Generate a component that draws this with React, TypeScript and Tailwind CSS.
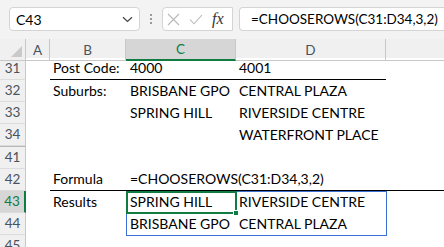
import React from "react";

const FONT = "[font-family:Lato,'Liberation_Sans',sans-serif]";

type Cell = { text?: string; cls?: string };

function RowHeader({ n, selected }: { n: string; selected?: boolean }) {
  return (
    <div
      className={
        "box-border flex items-center justify-center border-b border-[#dcdcdc] text-[13.5px] " +
        (selected
          ? "bg-[#d6d6d6] text-[#107c41] border-r-2 border-r-[#107c41]"
          : "bg-[#f0f0f0] text-[#48535e] border-r border-r-[#c8c8c8]")
      }
    >
      {n}
    </div>
  );
}

function C({ text, cls }: Cell) {
  return (
    <div className={"box-border flex items-end pl-[3px] pb-[3px] text-[14px] leading-[17px] text-black whitespace-nowrap overflow-visible " + (cls ?? "")}>
      {text}
    </div>
  );
}

function Row({
  n,
  cells,
  selected,
  h = "h-[22px]",
}: {
  n: string;
  cells: Cell[];
  selected?: boolean;
  h?: string;
}) {
  return (
    <div className={"grid grid-cols-[26px_24px_76px_110px_150px_1fr] " + h}>
      <RowHeader n={n} selected={selected} />
      {cells.map((c, i) => (
        <C key={i} {...c} />
      ))}
    </div>
  );
}

export default function App() {
  return (
    <div className={"w-[444px] h-[247px] overflow-hidden bg-white " + FONT}>
      {/* Formula bar */}
      <div className="flex h-[39px] items-start bg-[#f3f3f3] pt-[7px] pl-[9px]">
        <div className="box-border flex h-[24px] w-[131px] items-center justify-between rounded-[4px] border border-[#d4d4d4] bg-white pl-[6px] pr-[6px] text-[14px] text-black">
          <span>C43</span>
          <svg width="11" height="7" viewBox="0 0 11 7" fill="none">
            <path d="M1 1.2 L5.5 5.5 L10 1.2" stroke="#444" strokeWidth="1.2" />
          </svg>
        </div>
        <div className="flex w-[22px] flex-col items-center justify-center gap-[2px] self-stretch pb-[8px]">
          <div className="h-[2px] w-[2px] bg-[#9a9a9a]" />
          <div className="h-[2px] w-[2px] bg-[#9a9a9a]" />
          <div className="h-[2px] w-[2px] bg-[#9a9a9a]" />
        </div>
        <div className="box-border flex h-[24px] w-[71px] items-center gap-[9px] rounded-l-[4px] border border-[#d4d4d4] bg-white pl-[4px]">
          <svg width="13" height="13" viewBox="0 0 13 13" fill="none">
            <path d="M1 1 L12 12 M12 1 L1 12" stroke="#b8b8b8" strokeWidth="1.1" />
          </svg>
          <svg width="14" height="11" viewBox="0 0 14 11" fill="none">
            <path d="M1 5.5 L5 9.8 L13 1" stroke="#b8b8b8" strokeWidth="1.1" />
          </svg>
          <span className="[font-family:'Liberation_Serif',serif] text-[16px] italic leading-none text-[#333]">
            fx
          </span>
        </div>
        <div className="box-border ml-[6px] flex h-[24px] flex-1 items-center rounded-l-[4px] border border-r-0 border-[#d4d4d4] bg-white pl-[11px] text-[13.5px] text-black">
          =CHOOSEROWS(C31:D34,3,2)
        </div>
      </div>

      {/* Sheet */}
      <div className="relative">
        {/* column headers */}
        <div className="grid h-[19px] grid-cols-[26px_24px_76px_110px_150px_1fr] bg-[#f0f0f0] text-[13.5px] text-[#48535e]">
          <div className="box-border relative border-r border-b border-[#c8c8c8]">
            <svg className="absolute bottom-[3px] right-[3px]" width="11" height="11" viewBox="0 0 11 11">
              <path d="M11 0 L11 11 L0 11 Z" fill="#c9c9c9" />
            </svg>
          </div>
          <div className="box-border flex items-center justify-center border-r border-b border-[#c8c8c8]">A</div>
          <div className="box-border flex items-center justify-center border-r border-b border-[#c8c8c8]">B</div>
          <div className="box-border flex items-center justify-center border-r border-r-[#c8c8c8] border-b-2 border-b-[#107c41] bg-[#d6d6d6] text-[#107c41]">C</div>
          <div className="box-border flex items-center justify-center border-r border-b border-[#c8c8c8]">D</div>
          <div className="box-border border-b border-[#c8c8c8]" />
        </div>

        <Row
          n="31"
          cells={[
            {},
            { text: "Post Code:", cls: "border-b border-black" },
            { text: "4000", cls: "border-b border-black pl-[4px]" },
            { text: "4001", cls: "border-b border-black" },
            {},
          ]}
        />
        <Row n="32" cells={[{}, { text: "Suburbs:" }, { text: "BRISBANE GPO", cls: "pl-[4px]" }, { text: "CENTRAL PLAZA" }, {}]} />
        <Row n="33" cells={[{}, {}, { text: "SPRING HILL", cls: "pl-[4px]" }, { text: "RIVERSIDE CENTRE" }, {}]} />
        <Row n="34" cells={[{}, {}, {}, { text: "WATERFRONT PLACE" }, {}]} />
        <div className="grid h-[1px] grid-cols-[26px_1fr]">
          <div className="bg-[#b8b8b8]" />
          <div />
        </div>
        <Row n="41" cells={[{}, {}, {}, {}, {}]} />
        <Row
          n="42"
          cells={[
            {},
            { text: "Formula", cls: "border-b border-black" },
            { text: "=CHOOSEROWS(C31:D34,3,2)", cls: "border-b border-black pl-[4px]" },
            { cls: "border-b border-black" },
            { cls: "border-b border-black" },
          ]}
        />
        <Row n="43" selected cells={[{}, { text: "Results" }, { text: "SPRING HILL", cls: "pl-[4px]" }, { text: "RIVERSIDE CENTRE" }, {}]} />
        <Row n="44" cells={[{}, {}, { text: "BRISBANE GPO", cls: "pl-[4px]" }, { text: "CENTRAL PLAZA" }, {}]} />
        <Row n="45" cells={[{}, {}, {}, {}, {}]} />

        {/* spill range border C43:D44 */}
        <div className="pointer-events-none absolute left-[126px] top-[152px] h-[45px] w-[261px] border border-[#3b6fd4]" />
        {/* active cell C43 */}
        <div className="pointer-events-none absolute left-[126px] top-[152px] h-[23px] w-[111px] border-2 border-[#107c41]" />
        <div className="pointer-events-none absolute left-[233px] top-[171px] h-[6px] w-[6px] border border-white bg-[#107c41]" />
      </div>
    </div>
  );
}
